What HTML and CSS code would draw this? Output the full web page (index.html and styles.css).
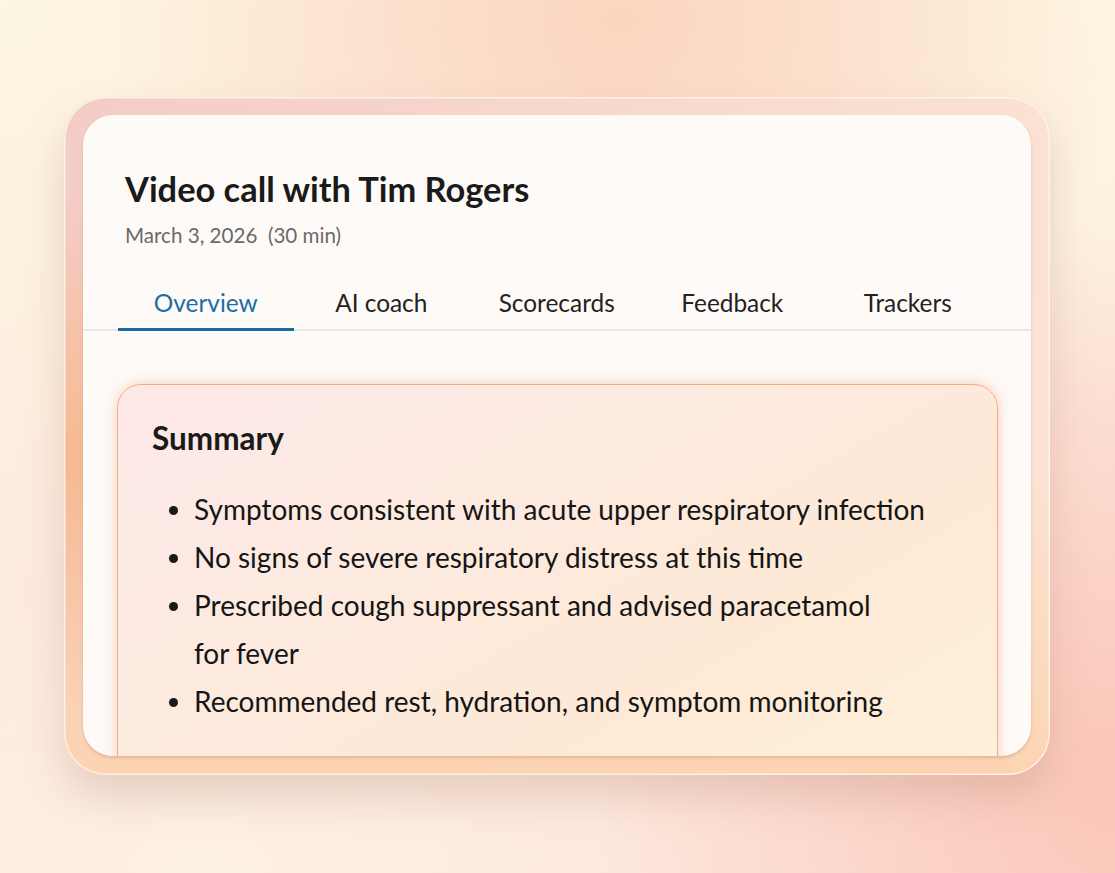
FILE: index.html
```html
<!DOCTYPE html>
<html lang="en">
<head>
<meta charset="utf-8">
<title>Video call with Tim Rogers</title>
<link rel="stylesheet" href="styles.css">
</head>
<body>
<main class="stage">
  <section class="frame">
    <div class="card">
      <header class="header">
        <h1 class="title">Video call with Tim Rogers</h1>
        <p class="meta">March 3, 2026&nbsp; (30 min)</p>
      </header>
      <nav class="tabs">
        <a class="tab tab-active">Overview</a>
        <a class="tab">AI coach</a>
        <a class="tab">Scorecards</a>
        <a class="tab">Feedback</a>
        <a class="tab">Trackers</a>
      </nav>
      <article class="summary">
        <h2 class="summary-title">Summary</h2>
        <ul class="points">
          <li>Symptoms consistent with acute upper respiratory infection</li>
          <li>No signs of severe respiratory distress at this time</li>
          <li>Prescribed cough suppressant and advised paracetamol<br>for fever</li>
          <li>Recommended rest, hydration, and symptom monitoring</li>
        </ul>
      </article>
    </div>
  </section>
</main>
</body>
</html>
```

FILE: styles.css
```css
html, body {
  margin: 0;
  padding: 0;
}
body {
  width: 1115px;
  height: 873px;
  overflow: hidden;
  font-family: Lato, "Noto Sans", sans-serif;
  background:
    radial-gradient(ellipse 520px 420px at 620px 20px, rgba(251, 208, 186, 0.85), rgba(251, 208, 186, 0) 100%),
    radial-gradient(ellipse 520px 560px at 1115px 780px, rgba(250, 196, 182, 0.95), rgba(250, 196, 182, 0) 100%),
    radial-gradient(ellipse 600px 500px at 0px 0px, rgba(253, 246, 224, 1), rgba(253, 246, 224, 0) 100%),
    radial-gradient(ellipse 500px 420px at 1115px 0px, rgba(254, 247, 226, 1), rgba(254, 247, 226, 0) 100%),
    radial-gradient(ellipse 500px 300px at 200px 873px, rgba(253, 240, 228, 1), rgba(253, 240, 228, 0) 100%),
    linear-gradient(180deg, #fcefdf 0%, #fdebdf 60%, #fde7dc 100%);
}
.stage {
  padding: 97px 0 0 64px;
}
.frame {
  box-sizing: border-box;
  width: 986px;
  height: 678px;
  padding: 18px 19px 19px 19px;
  border-radius: 42px;
  background:
    radial-gradient(ellipse 140px 260px at 0px 360px, rgba(246, 184, 140, 0.95), rgba(246, 184, 140, 0) 100%),
    linear-gradient(180deg, rgba(252, 212, 178, 0) 55%, rgba(252, 212, 178, 1) 100%),
    linear-gradient(100deg, rgba(244, 204, 198, 1) 0%, rgba(247, 214, 204, 1) 40%, rgba(252, 228, 212, 1) 100%);
  box-shadow:
    inset 0 0 0 1.5px rgba(255, 246, 238, 0.85),
    0 22px 40px rgba(170, 120, 100, 0.26);
}
.card {
  height: 100%;
  box-sizing: border-box;
  border-radius: 30px;
  background: #fefaf7;
  overflow: hidden;
  box-shadow: 0 2px 3px rgba(150, 100, 70, 0.25);
}
.header {
  padding: 53px 42px 0 42px;
}
.title {
  margin: 0;
  font-size: 34.4px;
  line-height: 42px;
  font-weight: 700;
  color: #1a1a1a;
}
.meta {
  margin: 12px 0 0 0;
  font-size: 20.6px;
  line-height: 26px;
  color: #6a6a6a;
}
.tabs {
  margin-top: 27px;
  padding-left: 35px;
  display: flex;
  border-bottom: 2px solid #ebe6e2;
}
.tab {
  width: 175.5px;
  height: 54px;
  box-sizing: border-box;
  display: flex;
  align-items: center;
  justify-content: center;
  font-size: 24.4px;
  color: #222222;
  position: relative;
}
.tab-active {
  color: #1c6ea6;
}
.tab-active::after {
  content: "";
  position: absolute;
  left: 0;
  right: 0;
  bottom: -2px;
  height: 3px;
  background: #1b6aa4;
}
.summary {
  margin: 53px 33px 0 34px;
  height: 420px;
  box-sizing: border-box;
  border: 1.5px solid #f2ac84;
  border-radius: 24px;
  padding: 34px 20px 0 34px;
  background:
    linear-gradient(150deg, #fde8e8 0%, #fdeae0 35%, #fde9d6 65%, #fef1dc 100%);
  box-shadow: 0 0 12px rgba(250, 160, 110, 0.5);
}
.summary-title {
  margin: 0;
  font-size: 31.5px;
  line-height: 38px;
  font-weight: 700;
  color: #1a1a1a;
}
.points {
  list-style: none;
  margin: 28px 0 0 0;
  padding: 0 0 0 17px;
}
.points li {
  display: flex;
  font-size: 28px;
  line-height: 48px;
  color: #151515;
}
.points li::before {
  content: "";
  flex: none;
  width: 9px;
  height: 9px;
  border-radius: 50%;
  background: #1a1a1a;
  margin: 21px 16px 0 0;
}
```
